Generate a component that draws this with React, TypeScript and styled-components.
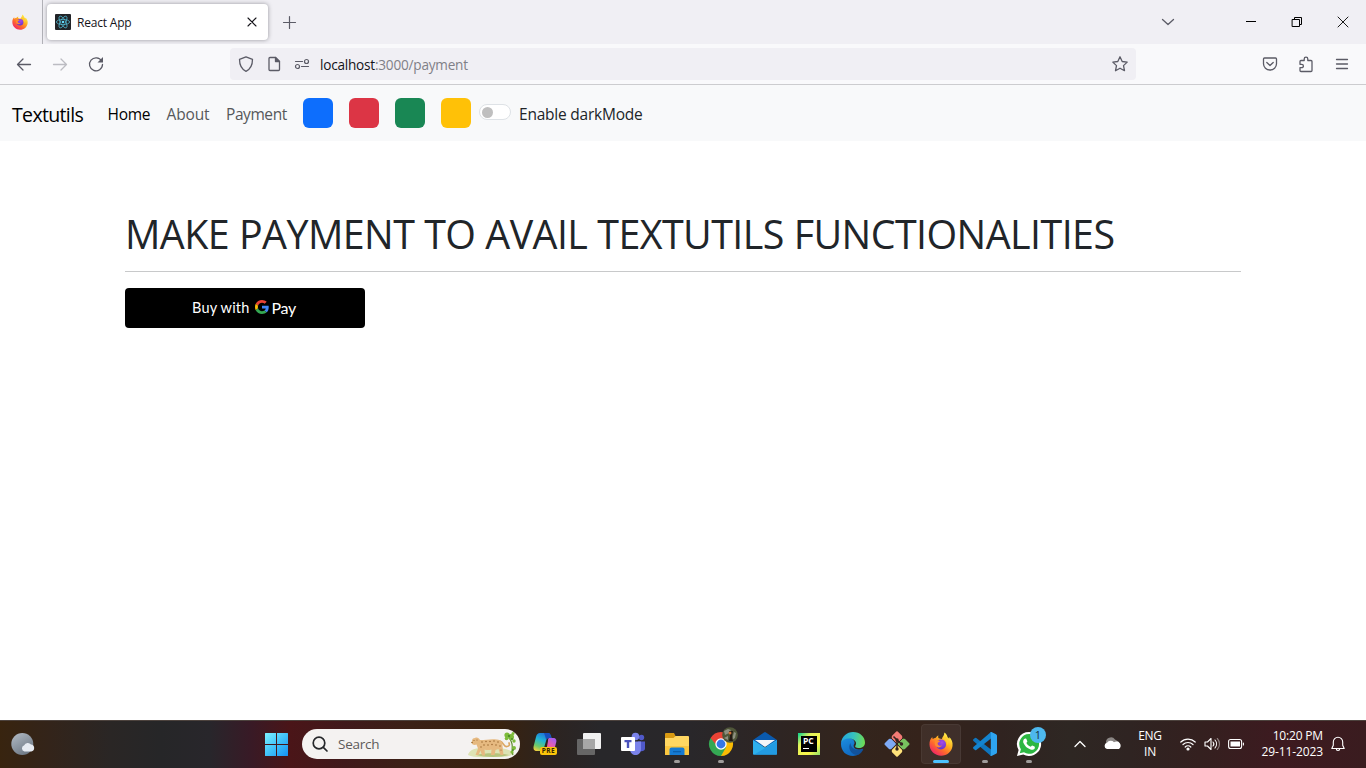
import React from "react";
import styled, { createGlobalStyle } from "styled-components";

const GlobalStyle = createGlobalStyle`
  *, *::before, *::after { box-sizing: border-box; }
  html, body { margin: 0; padding: 0; background: #fff; overflow: hidden; }
  body { font-family: "Open Sans", "Noto Sans", sans-serif; color: #212529; }
  svg { display: block; flex: none; overflow: visible; }
`;

const Screen = styled.div`
  display: flex;
  flex-direction: column;
  width: 1366px;
  height: 768px;
`;

const Text = styled.span<{ $size: number; $track?: number; $color?: string; $weight?: number }>`
  font-size: ${(p) => p.$size}px;
  letter-spacing: ${(p) => p.$track ?? 0}px;
  color: ${(p) => p.$color ?? "inherit"};
  font-weight: ${(p) => p.$weight ?? 400};
  white-space: nowrap;
`;

/* ---------- browser chrome ---------- */

const TabStrip = styled.div`
  display: flex;
  align-items: center;
  height: 44px;
  background: #f0eff4;
`;

const PinnedTab = styled.div`
  display: flex;
  align-items: center;
  width: 43px;
  height: 44px;
  padding-left: 12px;
  border-right: 1px solid #b1b1b7;
`;

const Tab = styled.div`
  display: flex;
  align-items: center;
  width: 221px;
  height: 36px;
  margin: 0 13px 0 4px;
  padding: 0 11px 0 8px;
  gap: 6px;
  border-radius: 4px;
  background: #fff;
  box-shadow: 0 0 4px rgba(60, 60, 67, 0.5);
  color: #15141a;
`;

const TabTitle = styled(Text)`
  flex: 1;
  line-height: 16px;
  padding-top: 1px;
`;

const WindowControls = styled.div`
  display: flex;
  align-items: center;
  margin-left: auto;
`;

const ControlCell = styled.div<{ $width: number }>`
  display: flex;
  align-items: center;
  justify-content: center;
  width: ${(p) => p.$width}px;
  height: 44px;
`;

const Toolbar = styled.div`
  display: flex;
  align-items: center;
  height: 41px;
  background: #f9f9fb;
  border-bottom: 1px solid #cccccf;
`;

const NavButtons = styled.div`
  display: flex;
  gap: 20px;
  width: 230px;
  padding-left: 16px;
`;

const AddressBar = styled.div`
  display: flex;
  align-items: center;
  width: 906px;
  height: 32px;
  padding: 0 8px;
  border-radius: 4px;
  background: #f0eff4;
`;

const AddressIcons = styled.div`
  display: flex;
  gap: 12px;
  margin-right: 10px;
`;

const Url = styled(Text)`
  flex: 1;
  line-height: 20px;
  padding-top: 1px;
  b { font-weight: 400; color: #15141a; }
`;

const ToolbarActions = styled.div`
  display: flex;
  gap: 20px;
  margin-left: auto;
  padding-right: 16px;
`;

/* ---------- page ---------- */

const Navbar = styled.nav`
  display: flex;
  align-items: center;
  height: 56px;
  padding: 0 12px;
  background: #f8f9fa;
`;

const Brand = styled(Text)`
  width: 95.5px;
  line-height: 30px;
  padding-top: 4px;
  color: #000;
`;

const NavLink = styled(Text)<{ $width: number }>`
  width: ${(p) => p.$width}px;
  line-height: 24px;
  padding-top: 1px;
`;

const Swatches = styled.div`
  display: flex;
  gap: 16px;
`;

const Swatch = styled.div<{ $fill: string }>`
  width: 30px;
  height: 30px;
  border-radius: 6px;
  background: ${(p) => p.$fill};
`;

const Toggle = styled.div`
  width: 32px;
  height: 16px;
  margin: 0 8px 2px;
  padding: 1px;
  border: 1px solid #dee2e6;
  border-radius: 8px;
  background: #fff;
  &::before {
    content: "";
    display: block;
    width: 11px;
    height: 11px;
    margin: 0.5px 0 0 0.5px;
    border-radius: 50%;
    background: #bfbfbf;
  }
`;

const Main = styled.main`
  flex: 1;
  padding: 64px 125px 0;
  background: #fff;
`;

const Heading = styled.h1`
  margin: 0;
  padding: 4px 0 0 0;
  height: 66px;
  font-size: 39.4px;
  line-height: 50px;
  font-weight: 400;
  letter-spacing: -0.56px;
  word-spacing: 0.2px;
  white-space: nowrap;
  color: #212529;
`;

const Rule = styled.hr`
  margin: 0 0 16px;
  border: 0;
  height: 1px;
  background: #c8c9ca;
`;

const PayButton = styled.button`
  display: flex;
  align-items: center;
  justify-content: center;
  width: 240px;
  height: 40px;
  padding: 0 2px 2px 0;
  border: 0;
  border-radius: 4px;
  background: #000;
  color: #fff;
  font-family: Lato, "Open Sans", sans-serif;
`;

const PayLogo = styled.span`
  display: flex;
  align-items: center;
  gap: 3px;
  margin-left: 5px;
`;

/* ---------- taskbar ---------- */

const Taskbar = styled.footer`
  display: flex;
  align-items: center;
  height: 48px;
  padding-bottom: 1px;
  border-top: 1px solid #4c423d;
  background: linear-gradient(90deg, #38240f 0px, #33241a 50px, #2a2625 110px, #262628 160px, #28262b 210px,
    #381a26 250px, #4a1518 290px, #40191b 345px, #3b2116 410px, #38220f 500px, #2c2421 555px, #28272a 600px,
    #29272a 690px, #2e2523 780px, #33251d 850px, #35231b 920px, #302320 1000px, #2e2723 1070px, #2f2422 1130px,
    #34201f 1200px, #3d1a20 1280px, #3a1c1f 1366px);
  color: #fff;
`;

const Weather = styled.div`
  width: 265px;
  padding-left: 11px;
`;

const SearchBox = styled.div`
  display: flex;
  align-items: center;
  width: 218px;
  height: 30px;
  margin: 0 3px 0 14px;
  padding-left: 10px;
  border-radius: 15px;
  background: #f4f2f1;
  overflow: hidden;
`;

const SearchLabel = styled(Text)`
  width: 140px;
  padding-left: 10px;
  line-height: 20px;
`;

const TaskSlot = styled.div<{ $active?: boolean }>`
  position: relative;
  display: flex;
  align-items: center;
  justify-content: center;
  width: 40px;
  height: 40px;
  margin: 0 2px;
  border-radius: 4px;
  background: ${(p) => (p.$active ? "rgba(255,255,255,0.06)" : "transparent")};
  box-shadow: ${(p) => (p.$active ? "inset 0 0 0 1px rgba(255,255,255,0.05)" : "none")};
`;

const Indicator = styled.i<{ $active?: boolean }>`
  position: absolute;
  bottom: 1px;
  width: ${(p) => (p.$active ? 16 : 6)}px;
  height: 3px;
  border-radius: 2px;
  background: ${(p) => (p.$active ? "#4cc2ff" : "#a09c9b")};
`;

const CountBadge = styled.b`
  position: absolute;
  top: 3px;
  right: 3px;
  width: 16px;
  height: 16px;
  border-radius: 50%;
  background: #4db8ee;
  color: #16303e;
  font-size: 11px;
  line-height: 16px;
  font-weight: 400;
  text-align: center;
`;

const Tray = styled.div`
  display: flex;
  align-items: center;
  margin-left: auto;
  padding-right: 20px;
`;

const TrayStack = styled.div<{ $align: string; $width: number }>`
  display: flex;
  flex-direction: column;
  align-items: ${(p) => p.$align};
  width: ${(p) => p.$width}px;
  line-height: 16px;
`;

const TrayIcons = styled.div`
  display: flex;
  align-items: center;
  gap: 8px;
  margin-left: 17px;
`;

const Bell = styled.span`
  margin-left: 7px;
`;

/* ---------- icons ---------- */

const ink = "#5b5b66";

const FirefoxLogo = ({ size, id }: { size: number; id: string }) => (
  <svg width={size} height={size} viewBox="0 0 24 24">
    <defs>
      <linearGradient id={id + "a"} x1="0.85" y1="0.1" x2="0.2" y2="0.95">
        <stop offset="0" stopColor="#fff44f" />
        <stop offset="0.35" stopColor="#ffb321" />
        <stop offset="0.65" stopColor="#ff6a2b" />
        <stop offset="1" stopColor="#f0226a" />
      </linearGradient>
      <radialGradient id={id + "b"} cx="0.6" cy="0.3" r="0.8">
        <stop offset="0" stopColor="#a64be8" />
        <stop offset="1" stopColor="#5a2fc9" />
      </radialGradient>
    </defs>
    <path
      fill={`url(#${id}a)`}
      d="M15.3.6c2.2 1.4 2.9 3.2 3.3 4.6.8.3 1.300 1 1.600 1.500.1-.5.1-1 0-1.600C22.700 7.400 24 10.500 23.500 13.900 22.800 19.600 18 23.700 12.200 23.700 5.800 23.700.6 18.800.5 12.500.4 9.600 1.300 6.900 3.300 5c0 .8.1 1.500.5 2 .8-.7 1.800-1.100 3-1.200.7-1.100 1.700-1.900 2.700-2.200-.5 1.100-.5 2 .3 2.700 1 .5 2.100.6 3.100.6.6-2.200 2.600-3.400 2.400-6.300z"
    />
    <circle cx="12" cy="12.400" r="5" fill={`url(#${id}b)`} />
    <path fill="#ff8a2e" d="M6 9.200c1.500-1.300 3.600-1.200 5 0-.6 1-2.200 1.200-2.400 2.200.3 1.800 2 2.600 4.400 2.200-1.200 1.700-3.600 2.400-5.600 1.200C5.900 13.600 5.300 11.200 6 9.200z" />
    <path fill="#ffcc33" d="M14.500 6.400c3 1.300 4.500 4.300 3.500 7.300 2.300-2.600 1.800-6.600-1.300-8.900z" />
  </svg>
);

const ReactLogo = () => (
  <svg width="16" height="16" viewBox="0 0 16 16">
    <rect width="16" height="16" rx="1" fill="#222428" />
    <g fill="none" stroke="#53b9d3" strokeWidth="0.75">
      <ellipse cx="8" cy="8" rx="6.600" ry="2.600" />
      <ellipse cx="8" cy="8" rx="6.600" ry="2.600" transform="rotate(60 8 8)" />
      <ellipse cx="8" cy="8" rx="6.600" ry="2.600" transform="rotate(120 8 8)" />
    </g>
    <circle cx="8" cy="8" r="1.300" fill="#61dafb" />
  </svg>
);

type StrokeProps = { w?: number; h?: number; color?: string; sw?: number; children: React.ReactNode };
const Stroke = ({ w = 16, h = 16, color = ink, sw = 1.3, children }: StrokeProps) => (
  <svg width={w} height={h} viewBox={`0 0 ${w} ${h}`} fill="none" stroke={color} strokeWidth={sw} strokeLinecap="round" strokeLinejoin="round">
    {children}
  </svg>
);

const GoogleG = () => (
  <svg width="14" height="14" viewBox="0 0 48 48">
    <path fill="#EA4335" d="M24 9.500c3.540 0 6.710 1.220 9.210 3.600l6.850-6.850C35.900 2.380 30.470 0 24 0 14.620 0 6.510 5.380 2.560 13.220l7.980 6.190C12.430 13.720 17.740 9.500 24 9.500z" />
    <path fill="#4285F4" d="M46.980 24.550c0-1.570-.15-3.090-.38-4.550H24v9.020h12.940c-.58 2.960-2.260 5.480-4.780 7.180l7.730 6c4.510-4.180 7.090-10.360 7.090-17.650z" />
    <path fill="#FBBC05" d="M10.530 28.590c-.48-1.450-.76-2.990-.76-4.590s.27-3.140.76-4.590l-7.980-6.190C.92 16.460 0 20.120 0 24c0 3.880.92 7.540 2.560 10.780l7.970-6.190z" />
    <path fill="#34A853" d="M24 48c6.480 0 11.930-2.130 15.890-5.810l-7.730-6c-2.150 1.450-4.920 2.300-8.160 2.300-6.260 0-11.570-4.220-13.470-9.910l-7.980 6.190C6.510 42.620 14.620 48 24 48z" />
  </svg>
);

const WeatherIcon = () => (
  <svg width="24" height="24" viewBox="0 0 24 24">
    <defs>
      <linearGradient id="moon" x1="0" y1="0" x2="0.6" y2="1">
        <stop offset="0" stopColor="#b4bdc7" />
        <stop offset="1" stopColor="#6f7a86" />
      </linearGradient>
    </defs>
    <circle cx="11.300" cy="12" r="11" fill="url(#moon)" />
    <path fill="#e6ebf2" d="M13.500 19.500a3.200 3.200 0 0 1-.3-6.200 4 4 0 0 1 6.800-.9 3.600 3.600 0 0 1 .3 7.100z" />
  </svg>
);

const WindowsLogo = () => (
  <svg width="23" height="23" viewBox="0 0 23 23">
    <defs>
      <linearGradient id="win" gradientUnits="userSpaceOnUse" x1="0" y1="0" x2="23" y2="23">
        <stop offset="0" stopColor="#7df1ff" />
        <stop offset="0.5" stopColor="#41c2fa" />
        <stop offset="1" stopColor="#1492f5" />
      </linearGradient>
    </defs>
    <path fill="url(#win)" d="M0 .5Q0 0 .5 0H11v11H0zM12 0h10.500q.5 0 .5.5V11H12zM0 12h11v11H.5q-.5 0-.5-.5zM12 12h11v10.500q0 .5-.5.5H12z" />
  </svg>
);

const Leopard = () => (
  <svg width="51" height="30" viewBox="0 0 51 30">
    <path fill="#dde3b4" d="M0 26c1-5 9-8 16-6 10-3 27 0 30 4-3 4-10 4-20 4S5 29 0 26z" />
    <path fill="#b5c47c" d="M8 26c9-2.500 24-2.500 33 0-8 2.500-24 2.500-33 0z" />
    <path fill="none" stroke="#5c8c2c" strokeWidth="1.200" d="M45 26c-3-5 2-8-3-16" />
    <g fill="#7dbb3a">
      <circle cx="39" cy="6" r="2.600" /><circle cx="43" cy="8" r="3" /><circle cx="38.500" cy="9.500" r="1.800" />
      <circle cx="46" cy="12" r="1.700" /><circle cx="46" cy="19" r="2" /><circle cx="44" cy="23" r="1.600" /><circle cx="45" cy="4.500" r="1.500" />
    </g>
    <g fill="#4d8f26"><circle cx="41" cy="7" r="1.200" /><circle cx="44" cy="10" r="1" /><circle cx="45" cy="21" r="1" /></g>
    <path fill="none" stroke="#dba763" strokeWidth="1.700" strokeLinecap="round" d="M32 12c4 1 3 6 7 5.500 2-.3 3-1.500 2-3.500" />
    <path fill="#e6b980" d="M4 12c0-2 1-3 3-3 2-1 4 0 5 2 6 0 11-1.500 17-.5 4 0 5.500 3 5.500 6.500l1 9h-3l-2-6-3 1-1 5h-3.500l.5-5.500c-3 .8-5 .8-7 0l.5 6h-3l-1.500-5-2 4.500H7.500L10 19.500l-1.500-4c-2 1-4.500 0-4.500-1z" />
    <g fill="#99662f">
      <circle cx="14" cy="13" r=".75" /><circle cx="18" cy="12.500" r=".75" /><circle cx="22" cy="12.500" r=".75" /><circle cx="26" cy="12" r=".75" />
      <circle cx="30" cy="13" r=".75" /><circle cx="16" cy="16" r=".75" /><circle cx="20" cy="16" r=".75" /><circle cx="24" cy="15.500" r=".75" />
      <circle cx="28" cy="16" r=".75" /><circle cx="32" cy="17" r=".75" /><circle cx="13" cy="18" r=".7" /><circle cx="33" cy="21" r=".6" />
      <circle cx="6" cy="11.500" r=".6" /><circle cx="9" cy="11" r=".6" /><circle cx="4" cy="13.500" r=".8" />
    </g>
  </svg>
);

const CopilotBadge = styled.span`
  position: absolute;
  left: 15px;
  top: 23px;
  width: 17px;
  height: 8px;
  border-radius: 2px;
  background: #fcc50a;
  color: #332600;
  font: 700 6.500px/8px "Open Sans", sans-serif;
  letter-spacing: 0.5px;
  text-align: center;
`;

const Copilot = () => (
  <svg width="24" height="24" viewBox="0 0 24 24">
    <defs>
      <linearGradient id="cpa" x1="0.6" y1="0" x2="0.2" y2="1">
        <stop offset="0" stopColor="#1f72d8" />
        <stop offset="0.4" stopColor="#21b6d6" />
        <stop offset="0.75" stopColor="#6dc96a" />
        <stop offset="1" stopColor="#f1cf3d" />
      </linearGradient>
      <linearGradient id="cpb" x1="0.7" y1="0" x2="0.2" y2="1">
        <stop offset="0" stopColor="#a65cf0" />
        <stop offset="0.5" stopColor="#ee5fa4" />
        <stop offset="1" stopColor="#f98a4b" />
      </linearGradient>
    </defs>
    <path fill="url(#cpb)" d="M16 6h4c3 0 4 2 3 5l-2 8c-1 2-2 3-4 3h-6c1 0 2-1 2-2l2-11c0-2 0-2 1-3z" />
    <path fill="url(#cpa)" d="M7 1h8c2 0 3 2 3.500 5H16c-2 0-2.500 1-3 3l-2 7c-.5 2-1 3-3 3H4c-3 0-4-2-3.300-5L3 5c.8-3 2-4 4-4z" />
    <path fill="#184fbd" d="M11 1h4c2 0 3 2 3.500 5H16c-1.600 0-2.200.6-2.700 2C12.500 6 12 3 11 1z" />
  </svg>
);

const TaskView = () => (
  <svg width="24" height="24" viewBox="0 0 24 24">
    <rect x="6" y="1" width="18" height="16" rx="1" fill="#f1f1f1" />
    <rect x="0" y="7" width="18" height="16" rx="1" fill="#6b6b6b" fillOpacity=".92" />
    <rect x="6" y="7" width="12" height="10" fill="#a7a7a7" />
  </svg>
);

const Teams = () => (
  <svg width="24" height="24" viewBox="0 0 24 24">
    <circle cx="20.500" cy="5.500" r="2.700" fill="#5059c9" />
    <path fill="#5059c9" d="M17 9.500h7v7c0 3-5 4-7 1z" />
    <circle cx="14.500" cy="4.500" r="3.800" fill="#7b83eb" />
    <path fill="#7b83eb" d="M9 9.500h11v7.500c0 8-11 8-11 0z" />
    <rect x="0" y="5" width="14" height="14" rx="1" fill="#fff" />
    <path fill="#4b53bc" d="M3.500 8h7v2.200H8.200V16H5.800v-5.800H3.500z" />
  </svg>
);

const Explorer = () => (
  <svg width="24" height="24" viewBox="0 0 24 24">
    <path fill="#d99a12" d="M0 2q0-1 1-1h8l1.500 3v4H0z" />
    <path fill="#ffd762" d="M0 6h8.500l2-2H23q1 0 1 1v17.500H0z" />
    <path fill="#fac63f" d="M0 14h24v8.500q0 .5-1 .5H1q-1 0-1-.5z" />
    <path fill="#157ad2" d="M4.500 23v-5.500q0-2 2-2h11q2 0 2 2V23z" />
    <path fill="#0a5eac" d="M8 19h8v1.300H8z" />
  </svg>
);

const Chrome = () => (
  <svg width="24" height="32" viewBox="0 0 24 32">
    <path fill="#ea4335" d="M12 16L1.600 10A12 12 0 0 1 22.400 10z" />
    <path fill="#fbbc04" d="M12 16l10.400-6A12 12 0 0 1 12 28z" />
    <path fill="#34a853" d="M12 16l5.200 3L12 28A12 12 0 0 1 1.600 10z" />
    <path fill="#ea4335" d="M1.600 10h20.800L12 10.500 8 18z" />
    <circle cx="12" cy="16" r="5.700" fill="#fff" />
    <circle cx="12" cy="16" r="4.400" fill="#3477e8" />
    <circle cx="21" cy="7" r="7.800" fill="#4f5639" />
    <path fill="#8e9080" d="M15 3l4-2 3 1-2 3-4 2zM25 4l2 1-1 5-3 2zM15 10l4-2 0 4z" />
    <path fill="#241a15" d="M20 3h4l-1 5 1 5h-4l1-5z" />
    <circle cx="21" cy="5" r="1.500" fill="#d1743a" />
  </svg>
);

const Mail = () => (
  <svg width="24" height="24" viewBox="0 0 24 24">
    <path fill="#0a5aae" d="M0 8L11 .5q1-.8 2 0L24 8v6H0z" />
    <path fill="#f3f6f8" d="M2 8h20L12 15z" />
    <path fill="#2eb0ec" d="M0 8l12 7.500L24 8v14q0 .8-.8.8H.8q-.8 0-.8-.8z" />
    <path fill="#1686d8" d="M1 22.800L24 9v13q0 .8-.8.8z" opacity=".5" />
  </svg>
);

const IdeTile = styled.span`
  display: flex;
  width: 22px;
  height: 22px;
  padding: 3px;
  background: linear-gradient(135deg, #1fd789 5%, #e3f35a 30%, #fcf84a 70%, #8be06c);
`;

const IdeInner = styled.span`
  width: 16px;
  height: 16px;
  padding-left: 2px;
  background: #000;
  color: #fff;
  font: 700 8.500px/10px "Open Sans", sans-serif;
  &::after {
    content: "";
    display: block;
    width: 6px;
    height: 1px;
    margin-top: 2px;
    background: #fff;
  }
`;

const Edge = () => (
  <svg width="24" height="24" viewBox="0 0 24 24">
    <defs>
      <linearGradient id="ea" x1="0" y1="0.3" x2="1" y2="0.4">
        <stop offset="0" stopColor="#22a5df" />
        <stop offset="0.5" stopColor="#35c1c0" />
        <stop offset="1" stopColor="#6ddc54" />
      </linearGradient>
      <linearGradient id="eb" x1="0" y1="0" x2="0.6" y2="1">
        <stop offset="0" stopColor="#1c8ee0" />
        <stop offset="1" stopColor="#0f66bd" />
      </linearGradient>
    </defs>
    <path fill="url(#eb)" d="M0 12C0 7 4 5.500 8 6c4 .5 6 3 5.500 5.500-1.500 1.500-1.500 6 4 6 2.500 0 4-1.200 4.700-.7C20 22 16 24 12 24 5 24 0 19 0 12z" />
    <path fill="#124c94" d="M9.500 11c-3 4-.5 12 7.500 12 2.500-1 4.600-3.500 5.400-6-.9-.5-2.200 1-4.900 1-4.500 0-8-3-8-7z" opacity=".8" />
    <path fill="url(#ea)" d="M0 11C1 4 6 0 12 0c7 0 12 5 12 10.500 0 4-3 5.500-6 5.500-3 0-4.500-1-3.500-2.500 2-3-1-7-6-7C4 6.500 1 8.500 0 11z" />
  </svg>
);

const GitLogo = () => (
  <svg width="24" height="24" viewBox="0 0 24 24">
    <g transform="rotate(45 12 12)">
      <rect x="3.500" y="3.500" width="8" height="8" rx="1" fill="#f37b75" />
      <rect x="12.500" y="3.500" width="8" height="8" rx="1" fill="#78c15f" />
      <rect x="3.500" y="12.500" width="8" height="8" rx="1" fill="#7eaaf5" />
      <rect x="12.500" y="12.500" width="8" height="8" rx="1" fill="#ffe27a" />
    </g>
    <g transform="rotate(45 12 12)">
      <rect x="3.500" y="3.500" width="8" height="8" rx="1" fill="#f37b75" />
      <rect x="12.500" y="3.500" width="8" height="8" rx="1" fill="#78c15f" />
    </g>
    <rect x="8" y="0.500" width="8" height="8" rx="1" fill="#f37b75" transform="rotate(45 12 4.500)" />
    <rect x="15.300" y="8" width="8" height="8" rx="1" fill="#78c15f" transform="rotate(45 19.300 12)" />
    <rect x="0.700" y="8" width="8" height="8" rx="1" fill="#7eaaf5" transform="rotate(45 4.700 12)" />
    <rect x="8" y="15.500" width="8" height="8" rx="1" fill="#ffe27a" transform="rotate(45 12 19.500)" />
    <g stroke="#35241f" strokeWidth="1.500" fill="none">
      <path d="M8.500 4.500L12 8v9M12 8l4.500 4" />
    </g>
    <g fill="#35241f"><circle cx="12" cy="8" r="1.700" /><circle cx="12" cy="17" r="1.700" /><circle cx="16.500" cy="12" r="1.700" /></g>
  </svg>
);

const VsCode = () => (
  <svg width="24" height="24" viewBox="0 0 24 24">
    <path fill="#0f75bd" d="M.4 7.300L2 5.900q.6-.5 1.300 0L18 17.500V24L.4 8.900q-.8-.8 0-1.600z" />
    <path fill="#1484cf" d="M.4 16.700L2 18.100q.6.500 1.300 0L18 6.500V0L.4 15.100q-.8.8 0 1.600z" />
    <path fill="#2ea4f0" d="M17.300 0q.6-.2 1.200.1L23 2.200q1 .5 1 1.600v16.400q0 1.100-1 1.600l-4.500 2.100q-.6.300-1.200.1.500-.3.500-1V1q0-.7-.5-1z" />
  </svg>
);

const WhatsApp = () => (
  <svg width="24" height="24" viewBox="0 0 24 24">
    <path fill="#fff" d="M12 0a12 12 0 1 1-5.700 22.500L0 24l1.600-6A12 12 0 0 1 12 0z" />
    <path fill="#2cb742" d="M12.200 2A9.900 9.900 0 1 1 7 20.300L2.800 21.300l1.100-4A9.900 9.900 0 0 1 12.200 2z" />
    <path fill="#fff" d="M8.400 6.500c.5 0 .8.100 1 .6l.9 2.100c.2.500-.7 1.300-.9 1.700.9 1.800 2.300 3 4.200 3.800.5-.1 1.100-1.500 1.600-1.300l2.300 1.100c.6.300.4 1.600 0 2.200-.9 1.200-2.600 1.300-4 .8-3.500-1.200-5.700-3.400-7-6.400-.7-1.700-.1-4.500 1.900-4.600z" />
  </svg>
);

/* ---------- application ---------- */

const tasks: { name: string; icon: React.ReactNode; open?: boolean; active?: boolean; extra?: React.ReactNode }[] = [
  { name: "copilot", icon: <Copilot />, extra: <CopilotBadge>PRE</CopilotBadge> },
  { name: "taskview", icon: <TaskView /> },
  { name: "teams", icon: <Teams /> },
  { name: "explorer", icon: <Explorer />, open: true },
  { name: "chrome", icon: <Chrome />, open: true },
  { name: "mail", icon: <Mail /> },
  { name: "pycharm", icon: <IdeTile><IdeInner>PC</IdeInner></IdeTile> },
  { name: "edge", icon: <Edge /> },
  { name: "git", icon: <GitLogo /> },
  { name: "firefox", icon: <FirefoxLogo size={24} id="fxt" />, open: true, active: true },
  { name: "vscode", icon: <VsCode />, open: true },
  { name: "whatsapp", icon: <WhatsApp />, open: true, extra: <CountBadge>1</CountBadge> },
];

const links = [
  { label: "Home", width: 59, color: "#000", track: -0.3 },
  { label: "About", width: 59.5, color: "#56585a", track: -0.15 },
  { label: "Payment", width: 77, color: "#56585a", track: -0.42 },
];

export default function App() {
  return (
    <Screen>
      <GlobalStyle />
      <TabStrip>
        <PinnedTab><FirefoxLogo size={16} id="fxp" /></PinnedTab>
        <Tab>
          <ReactLogo />
          <TabTitle $size={12} $track={-0.2}>React App</TabTitle>
          <Stroke w={10} h={10} color="#15141a" sw={1.1}><path d="M1 1l8 8M9 1l-8 8" /></Stroke>
        </Tab>
        <Stroke color={ink} sw={1.2}><path d="M8.500 2.500v12M2.500 8.500h12" /></Stroke>
        <WindowControls>
          <ControlCell $width={46}><Stroke w={12} h={8}><path d="M.5 1.500L6 6.500l5.500-5" /></Stroke></ControlCell>
          <ControlCell $width={37} />
          <ControlCell $width={46}><Stroke w={10} h={10} color="#000" sw={1}><path strokeLinecap="butt" d="M0 4.500h10" /></Stroke></ControlCell>
          <ControlCell $width={46}><Stroke w={10} h={10} color="#000" sw={1}><path d="M.5 2.500h7v7h-7zM2.500 2.500v-2h7v7h-2" /></Stroke></ControlCell>
          <ControlCell $width={46}><Stroke w={10} h={10} color="#000" sw={0.9}><path d="M0 0l10 10M10 0L0 10" /></Stroke></ControlCell>
        </WindowControls>
      </TabStrip>

      <Toolbar>
        <NavButtons>
          <Stroke><path d="M14.500 8.500h-13M7 3L1.500 8.500 7 14" /></Stroke>
          <Stroke color="#bcbcc2"><path d="M1.500 8.500h13M9 3l5.500 5.500L9 14" /></Stroke>
          <Stroke><path d="M13.600 5A6.500 6.500 0 1 0 14.500 8.500" /><path fill={ink} stroke="none" d="M15 1v5.500H9.500z" /></Stroke>
        </NavButtons>
        <AddressBar>
          <AddressIcons>
            <Stroke><path d="M8 .8l6.500 2.500c0 5-1 9.500-6.500 12C2.500 12.800 1.500 8.300 1.500 3.300z" /></Stroke>
            <Stroke><path d="M9.500 1.500H4q-1 0-1 1v11q0 1 1 1h8.500q1 0 1-1v-8z" /><path fill={ink} d="M9.500 1.500v4h4z" /></Stroke>
            <Stroke sw={1.2}><path d="M1.500 5.500h7M7.500 10.500h7" /><circle cx="12.500" cy="5.500" r="2" /><circle cx="3.500" cy="10.500" r="2" /></Stroke>
          </AddressIcons>
          <Url $size={13.6} $track={-0.22} $color="#808087"><b>localhost</b>:3000/payment</Url>
          <Stroke><path d="M8 .8l2.200 4.700 5 .6-3.700 3.500 1 5.100L8 12.200l-4.500 2.500 1-5.100L.8 6.100l5-.6z" /></Stroke>
        </AddressBar>
        <ToolbarActions>
          <Stroke><path d="M2.500 2h11q1 0 1 1v4.800a6.500 6.200 0 0 1-13 0V3q0-1 1-1zM4.800 6.500L8 9.500l3.200-3" /></Stroke>
          <Stroke><path d="M2 5.500q0-1 1-1h3.200V3a1.800 1.800 0 0 1 3.600 0v1.500H13q1 0 1 1v9q0 1-1 1H3q-1 0-1-1v-2.800h1.700a1.700 1.700 0 0 0 0-3.400H2z" /></Stroke>
          <Stroke><path d="M2.500 3.500h11M2.500 8h11M2.500 12.500h11" /></Stroke>
        </ToolbarActions>
      </Toolbar>

      <Navbar>
        <Brand $size={19.5} $track={-0.65}>Textutils</Brand>
        {links.map((l) => (
          <NavLink key={l.label} $size={15.5} $track={l.track} $color={l.color} $width={l.width}>{l.label}</NavLink>
        ))}
        <Swatches>
          {["#0d6efd", "#dc3545", "#198754", "#ffc107"].map((c) => <Swatch key={c} $fill={c} />)}
        </Swatches>
        <Toggle />
        <NavLink $size={15.5} $track={-0.22} $color="#212529" $width={140}>Enable darkMode</NavLink>
      </Navbar>

      <Main>
        <Heading>MAKE PAYMENT TO AVAIL TEXTUTILS FUNCTIONALITIES</Heading>
        <Rule />
        <PayButton>
          <Text $size={14.5} $track={0.2}>Buy with</Text>
          <PayLogo>
            <GoogleG />
            <Text $size={16} $track={-0.3}>Pay</Text>
          </PayLogo>
        </PayButton>
      </Main>

      <Taskbar>
        <Weather><WeatherIcon /></Weather>
        <WindowsLogo />
        <SearchBox>
          <Stroke color="#26282b" sw={1.7}><circle cx="7" cy="7" r="5.800" /><path d="M11.300 11.300l3.700 3.700" /></Stroke>
          <SearchLabel $size={13.5} $track={-0.25} $color="#5d5b5a">Search</SearchLabel>
          <Leopard />
        </SearchBox>
        {tasks.map((t) => (
          <TaskSlot key={t.name} $active={t.active}>
            {t.icon}
            {t.extra}
            {t.open && <Indicator $active={t.active} />}
          </TaskSlot>
        ))}
        <Tray>
          <Stroke w={12} h={8} color="#fff" sw={1.3}><path d="M1 6.500l5-5 5 5" /></Stroke>
          <svg width="51" height="16" viewBox="0 0 51 16">
            <path fill="#8b8785" d="M20 7a5 5 0 0 1 9-3.500L33 6v4H20z" />
            <path fill="#fff" d="M21 13a3.200 3.200 0 0 1 0-6.200 4.500 4.500 0 0 1 7-.5A3.600 3.600 0 0 1 33 13z" />
          </svg>
          <TrayStack $align="center" $width={26}>
            <Text $size={12} $track={-0.3}>ENG</Text>
            <Text $size={12} $track={-0.3}>IN</Text>
          </TrayStack>
          <TrayIcons>
            <Stroke color="#fff" sw={1.2}><path d="M.8 6a10.300 10.300 0 0 1 14.400 0M3 8.500a7.200 7.200 0 0 1 10 0M5.200 11a4 4 0 0 1 5.600 0" /><circle cx="8" cy="13" r="1" fill="#fff" /></Stroke>
            <Stroke color="#fff" sw={1.1}><path d="M1 6h2.500L7 2.500v11L3.500 10H1zM9 6a3 3 0 0 1 0 4M11 4a6 6 0 0 1 0 8" /><path stroke="#8d8080" d="M13.300 2.500a8 8 0 0 1 0 11" /></Stroke>
            <Stroke w={16} h={16} color="#fff" sw={1.1}><rect x=".6" y="3.500" width="13" height="9" rx="2" /><rect x="2.500" y="5.500" width="9.500" height="5" fill="#fff" stroke="none" /><path d="M15.400 7v2" /></Stroke>
          </TrayIcons>
          <TrayStack $align="flex-end" $width={79}>
            <Text $size={12} $track={-0.17}>10:20 PM</Text>
            <Text $size={12} $track={-0.12}>29-11-2023</Text>
          </TrayStack>
          <Bell>
            <Stroke color="#fff" sw={1.1}><path d="M8 1.200a4.700 4.700 0 0 0-4.700 4.700v3.300L1.800 12.500h12.400l-1.500-3.300V5.900A4.700 4.700 0 0 0 8 1.200zM6.300 12.800a1.700 1.700 0 0 0 3.400 0" /></Stroke>
          </Bell>
        </Tray>
      </Taskbar>
    </Screen>
  );
}
